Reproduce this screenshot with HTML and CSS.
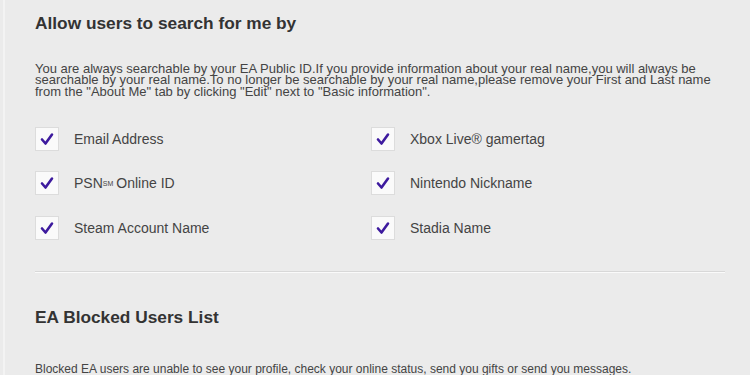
FILE: index.html
```html
<!DOCTYPE html>
<html lang="en">
<head>
    <meta charset="UTF-8">
    <meta name="viewport" content="width=device-width, initial-scale=1.0">
    <title>Privacy Settings</title>
    <link rel="stylesheet" href="styles.css">
</head>
<body>

    <div class="page">

        <!-- Search visibility -->
        <section class="section">
            <h2>Allow users to search for me by</h2>
            <p class="intro">You are always searchable by your EA Public ID.If you provide information about your real name,you will always be searchable by your real name.To no longer be searchable by your real name,please remove your First and Last name from the "About Me" tab by clicking "Edit" next to "Basic information".</p>

            <div class="options">
                <label class="option"><span class="check"><svg viewBox="0 0 22 22"><path d="M6 11.5 L9.5 15.5 L16 6.5"/></svg></span>Email Address</label>
                <label class="option"><span class="check"><svg viewBox="0 0 22 22"><path d="M6 11.5 L9.5 15.5 L16 6.5"/></svg></span>Xbox Live® gamertag</label>
                <label class="option"><span class="check"><svg viewBox="0 0 22 22"><path d="M6 11.5 L9.5 15.5 L16 6.5"/></svg></span>PSN<sup>SM</sup>Online ID</label>
                <label class="option"><span class="check"><svg viewBox="0 0 22 22"><path d="M6 11.5 L9.5 15.5 L16 6.5"/></svg></span>Nintendo Nickname</label>
                <label class="option"><span class="check"><svg viewBox="0 0 22 22"><path d="M6 11.5 L9.5 15.5 L16 6.5"/></svg></span>Steam Account Name</label>
                <label class="option"><span class="check"><svg viewBox="0 0 22 22"><path d="M6 11.5 L9.5 15.5 L16 6.5"/></svg></span>Stadia Name</label>
            </div>
        </section>

        <hr class="divider">

        <!-- Blocked users -->
        <section class="section">
            <h2>EA Blocked Users List</h2>
            <p class="note">Blocked EA users are unable to see your profile, check your online status, send you gifts or send you messages.</p>
        </section>

    </div>

</body>
</html>
```

FILE: styles.css
```css
body {
    background-color: #ebebeb;
    color: #444;
    font-family: 'Liberation Sans', Arial, sans-serif;
    margin: 0;
    overflow: hidden;
}
.page {
    margin-left: 3px;
    border-left: 2px solid #f3f3f3;
    padding: 13px 25px 0 30px;
    min-height: 375px;
}
h2 {
    font-size: 17.3px;
    font-weight: bold;
    color: #333;
    margin: 0;
}
.intro {
    font-size: 13px;
    line-height: 11.5px;
    max-width: 685px;
    margin: 28.5px 0 0;
    color: #444;
}
.note {
    font-size: 12px;
    margin: 34px 0 0;
    color: #444;
}
.options {
    display: grid;
    grid-template-columns: 336px 1fr;
    margin-top: 19.5px;
}
.option {
    display: flex;
    align-items: center;
    height: 44.5px;
    font-size: 14px;
    color: #444;
}
.option sup {
    font-size: 7px;
    vertical-align: 5px;
    margin-right: 3px;
}
.check {
    width: 22px;
    height: 22px;
    background-color: #fafafa;
    border: 1px solid #dcdcdc;
    margin-right: 15px;
    display: flex;
}
.check svg {
    width: 22px;
    height: 22px;
}
.check path {
    fill: none;
    stroke: #3d1a9e;
    stroke-width: 2.6;
    stroke-linecap: round;
    stroke-linejoin: round;
}
.divider {
    border: none;
    border-top: 1px solid #d8d8d8;
    border-bottom: 1px solid #fafafa;
    margin: 21px 0 34px;
}
```
